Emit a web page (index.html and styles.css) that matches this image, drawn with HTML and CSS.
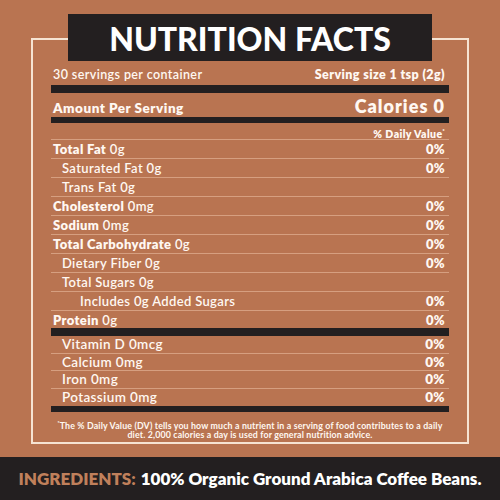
FILE: index.html
```html
<!DOCTYPE html>
<html lang="en">
  <head>
    <meta charset="UTF-8" />
    <meta name="viewport" content="width=device-width, initial-scale=1.0" />
    <title>Nutrition Facts</title>
    <link rel="stylesheet" href="styles.css">
  </head>
  <body>
    <div class="label">
      <div class="title">NUTRITION FACTS</div>

      <div class="frame">
        <div class="serving-row">
          <span>30 servings per container</span>
          <span class="bold">Serving size 1 tsp (2g)</span>
        </div>
        <div class="bar thick"></div>

        <div class="amount-row">
          <span class="bold">Amount Per Serving</span>
          <span class="calories">Calories 0</span>
        </div>
        <div class="bar"></div>

        <div class="dv-head">% Daily Value<sup>*</sup></div>

        <div class="rows">
          <div class="row"><span><b>Total Fat</b> 0g</span><b>0%</b></div>
          <div class="row indent"><span>Saturated Fat 0g</span><b>0%</b></div>
          <div class="row indent"><span>Trans Fat 0g</span></div>
          <div class="row"><span><b>Cholesterol</b> 0mg</span><b>0%</b></div>
          <div class="row"><span><b>Sodium</b> 0mg</span><b>0%</b></div>
          <div class="row"><span><b>Total Carbohydrate</b> 0g</span><b>0%</b></div>
          <div class="row indent"><span>Dietary Fiber 0g</span><b>0%</b></div>
          <div class="row indent"><span>Total Sugars 0g</span></div>
          <div class="row indent-2"><span>Includes 0g Added Sugars</span><b>0%</b></div>
          <div class="row last"><span><b>Protein</b> 0g</span><b>0%</b></div>
        </div>
        <div class="bar thick"></div>

        <div class="rows minerals">
          <div class="row indent"><span>Vitamin D 0mcg</span><b>0%</b></div>
          <div class="row indent"><span>Calcium 0mg</span><b>0%</b></div>
          <div class="row indent"><span>Iron 0mg</span><b>0%</b></div>
          <div class="row indent last"><span>Potassium 0mg</span><b>0%</b></div>
        </div>
        <div class="bar"></div>

        <p class="footnote">
          <sup>*</sup>The % Daily Value (DV) tells you how much a nutrient in a serving of food contributes to a daily<br />
          diet. 2,000 calories a day is used for general nutrition advice.
        </p>
      </div>
    </div>

    <div class="ingredients">
      <span class="ing-label">INGREDIENTS:</span> 100% Organic Ground Arabica Coffee Beans.
    </div>
  </body>
</html>
```

FILE: styles.css
```css
* {
  margin: 0;
  padding: 0;
  box-sizing: border-box;
  font-family: "Lato", "Inter", "Liberation Sans", sans-serif;
}

html,
body {
  width: 500px;
  height: 500px;
  overflow: hidden;
}

body {
  background-color: #b97451;
  color: #fff8f2;
  display: flex;
  flex-direction: column;
}

.label {
  padding: 14px 31px 0;
  height: 457px;
}

.title {
  position: relative;
  z-index: 1;
  width: 364px;
  height: 47px;
  margin: 0 auto;
  background-color: #231f20;
  color: #fff;
  font-size: 32px;
  font-weight: 900;
  text-align: center;
  line-height: 49px;
}

.frame {
  margin-top: -23px;
  height: 406px;
  border: 2px solid #f6e4d3;
  padding: 21px 18px 0;
}

.bold,
b {
  font-weight: 800;
}

.serving-row {
  display: flex;
  justify-content: space-between;
  align-items: flex-end;
  height: 24px;
  padding: 0 4px 3px 2px;
  font-size: 12.5px;
  font-weight: 600;
  letter-spacing: 0.4px;
}

.bar {
  height: 6px;
  background-color: #231f20;
}

.bar.thick {
  height: 8px;
}

.amount-row {
  display: flex;
  justify-content: space-between;
  align-items: flex-end;
  height: 24px;
  padding: 0 4px 1px 2px;
  font-size: 13.5px;
  letter-spacing: 0.5px;
}

.calories {
  font-size: 18px;
  font-weight: 800;
  line-height: 20px;
  letter-spacing: 1px;
}

.dv-head {
  height: 16px;
  text-align: right;
  padding-right: 4px;
  font-size: 10.5px;
  font-weight: 800;
  line-height: 16px;
  letter-spacing: 0.4px;
}

.dv-head sup,
.footnote sup {
  font-size: 5px;
}

.rows {
  border-top: 1.5px solid #d69f80;
}

.row {
  display: flex;
  justify-content: space-between;
  align-items: center;
  height: 19px;
  padding: 0 4px 0 2px;
  border-bottom: 1.5px solid #d69f80;
  font-size: 13px;
  font-weight: 600;
  letter-spacing: 0.35px;
}

.row.last {
  border-bottom: none;
  height: 17px;
}

.row.indent span {
  padding-left: 9px;
}

.row.indent-2 span {
  padding-left: 27px;
}

.minerals {
  border-top: none;
}

.minerals .row {
  height: 17.5px;
  font-size: 13.5px;
}

.minerals .row.last {
  height: 17px;
}

.footnote {
  padding-top: 7px;
  text-align: center;
  font-size: 8.8px;
  font-weight: 700;
  line-height: 9.5px;
  letter-spacing: 0.15px;
}

.ingredients {
  flex: 1;
  background-color: #231f20;
  color: #fff;
  display: flex;
  align-items: center;
  justify-content: center;
  font-size: 17px;
  font-weight: 800;
  white-space: nowrap;
}

.ing-label {
  color: #c0805b;
  margin-right: 5px;
}
```
